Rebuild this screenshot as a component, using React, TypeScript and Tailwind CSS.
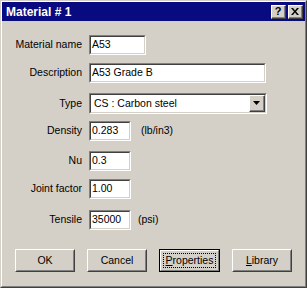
import React from "react";

const font = { fontFamily: '"Liberation Sans", Arial, sans-serif' };

function Sunken({ w, children }: { w: string; children?: React.ReactNode }) {
  return (
    <div className={`${w} h-[20px] border border-t-[#808080] border-l-[#808080] border-b-white border-r-white`}>
      <div className="h-full border border-t-[#404040] border-l-[#404040] border-b-[#d4d0c8] border-r-[#d4d0c8] bg-white flex items-center pl-[1px] text-[10.5px] text-black">
        {children}
      </div>
    </div>
  );
}

function Row({ label, mt, children }: { label: string; mt: string; children: React.ReactNode }) {
  return (
    <div className={`flex items-center ${mt}`}>
      <div className="w-[80px] text-right text-[10.5px] text-black pr-0">{label}</div>
      <div className="ml-[7px] flex items-center">{children}</div>
    </div>
  );
}

function Btn({ children, def }: { children: React.ReactNode; def?: boolean }) {
  const inner = (
    <div className="h-full border border-t-white border-l-white border-b-[#404040] border-r-[#404040]">
      <div className="h-full border border-t-[#d4d0c8] border-l-[#d4d0c8] border-b-[#808080] border-r-[#808080] flex items-center justify-center text-[10.5px] text-black">
        {children}
      </div>
    </div>
  );
  if (def) {
    return (
      <div className="w-[61px] h-[23px] border border-black">
        <div className="h-full border border-t-white border-l-white border-b-[#808080] border-r-[#808080]">
          <div className="h-full flex items-center justify-center p-[2px]">
            <div className="w-full h-full border border-dotted border-black flex items-center justify-center text-[10.5px] text-black">
              {children}
            </div>
          </div>
        </div>
      </div>
    );
  }
  return <div className="w-[60px] h-[23px]">{inner}</div>;
}

function TitleBtn({ children }: { children: React.ReactNode }) {
  return (
    <div className="w-[15px] h-[14px] bg-[#d4d0c8] border border-t-white border-l-white border-b-[#404040] border-r-[#404040]">
      <div className="h-full border-b border-r border-b-[#808080] border-r-[#808080] flex items-center justify-center text-[11px] font-bold text-black leading-none">
        {children}
      </div>
    </div>
  );
}

export default function App() {
  return (
    <div style={font} className="w-[307px] h-[288px] bg-[#d4d0c8] border border-t-[#d4d0c8] border-l-[#d4d0c8] border-b-[#404040] border-r-[#404040]">
      <div className="h-full border border-t-white border-l-white border-b-[#808080] border-r-[#808080] flex flex-col">
        {/* title bar */}
        <div className="h-[19px] bg-[#0a0a80] flex items-center pl-[4px] pr-[2px]">
          <span className="text-white font-bold text-[12px] flex-1">Material # 1</span>
          <div className="flex gap-[1px]">
            <TitleBtn>?</TitleBtn>
            <div className="ml-[1px]">
              <TitleBtn>
                <svg width="8" height="7" viewBox="0 0 8 7">
                  <path d="M0 0h2l2 2.5L6 0h2L5 3.5 8 7H6L4 4.5 2 7H0l3-3.5z" fill="#000" />
                </svg>
              </TitleBtn>
            </div>
          </div>
        </div>

        {/* fields */}
        <div className="flex flex-col">
          <Row label="Material name" mt="mt-[14px]">
            <Sunken w="w-[57px]">A53</Sunken>
          </Row>
          <Row label="Description" mt="mt-[8px]">
            <Sunken w="w-[177px]">A53 Grade B</Sunken>
          </Row>
          <Row label="Type" mt="mt-[10px]">
            <div className="w-[178px] h-[21px] border border-t-[#808080] border-l-[#808080] border-b-white border-r-white">
              <div className="h-full border border-t-[#404040] border-l-[#404040] border-b-[#d4d0c8] border-r-[#d4d0c8] bg-white flex items-center text-[10.5px] text-black">
                <span className="flex-1 pl-[3px]">CS : Carbon steel</span>
                <div className="w-[16px] h-full bg-[#d4d0c8] border border-t-white border-l-white border-b-[#404040] border-r-[#404040]">
                  <div className="h-full border-b border-r border-b-[#808080] border-r-[#808080] flex items-center justify-center">
                    <svg width="7" height="4" viewBox="0 0 7 4">
                      <path d="M0 0h7L3.5 4z" fill="#000" />
                    </svg>
                  </div>
                </div>
              </div>
            </div>
          </Row>
          <Row label="Density" mt="mt-[7px]">
            <Sunken w="w-[42px]">0.283</Sunken>
            <span className="ml-[10px] text-[10.5px] text-black">(lb/in3)</span>
          </Row>
          <Row label="Nu" mt="mt-[10px]">
            <Sunken w="w-[42px]">0.3</Sunken>
          </Row>
          <Row label="Joint factor" mt="mt-[8px]">
            <Sunken w="w-[42px]">1.00</Sunken>
          </Row>
          <Row label="Tensile" mt="mt-[11px]">
            <Sunken w="w-[42px]">35000</Sunken>
            <span className="ml-[7px] text-[10.5px] text-black">(psi)</span>
          </Row>
        </div>

        {/* buttons */}
        <div className="flex mt-[19px] pl-[13px] gap-[12px]">
          <Btn>OK</Btn>
          <Btn>Cancel</Btn>
          <Btn def>
            <span>
              <span className="underline">P</span>roperties
            </span>
          </Btn>
          <Btn>
            <span>
              <span className="underline">L</span>ibrary
            </span>
          </Btn>
        </div>
      </div>
    </div>
  );
}
